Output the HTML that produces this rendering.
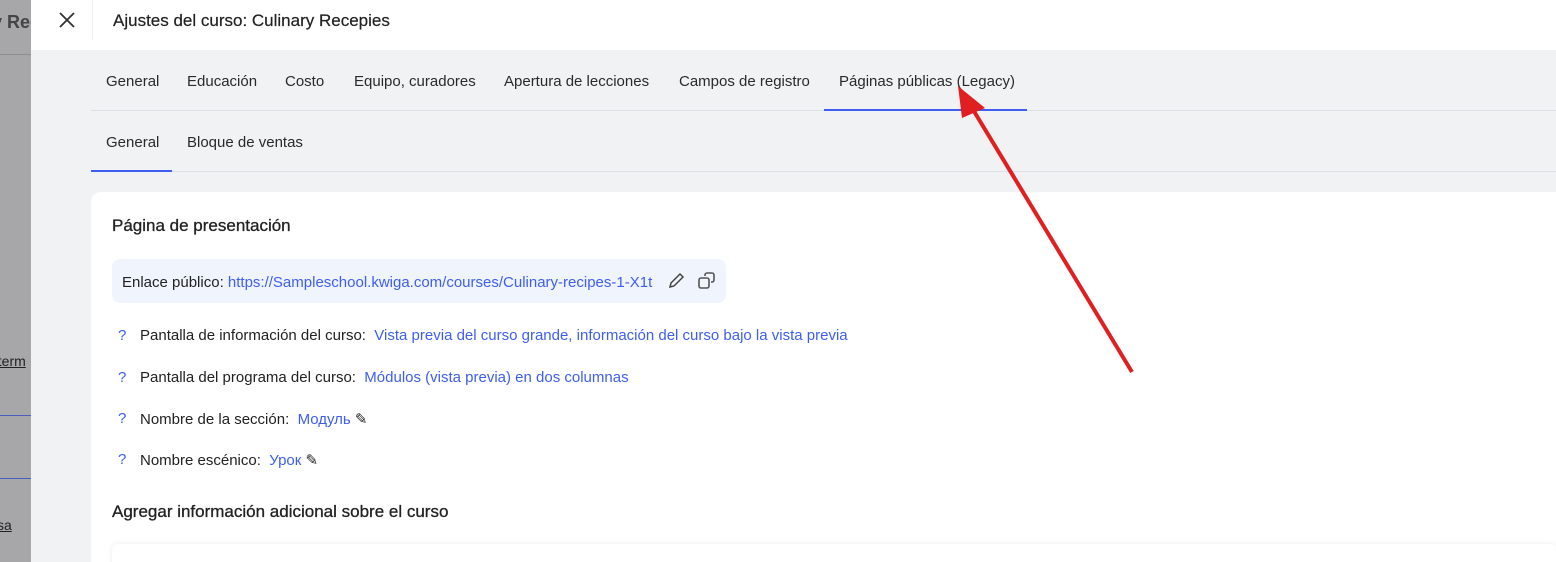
<!DOCTYPE html>
<html><head><meta charset="utf-8"><style>
*{margin:0;padding:0;box-sizing:border-box}
html,body{width:1556px;height:562px;overflow:hidden}
body{font-family:"Liberation Sans",sans-serif;background:#f0f2f4;position:relative;color:#222}
.left{position:absolute;left:0;top:0;width:31px;height:562px;background:#a7a7a9;overflow:hidden;white-space:nowrap}
.hdr{position:absolute;left:31px;top:0;right:0;height:50px;background:#fff}
.tab{position:absolute;font-size:15px;color:#2a2a2a;white-space:nowrap}
.line{position:absolute;height:1px;background:#dcdfe3}
.card{position:absolute;left:91px;top:192px;width:1465px;height:370px;background:#fff;border-radius:10px 0 0 0}
.blue{color:#3d5ef0}
.q{position:absolute;left:118px;color:#3d5ef0;font-size:15px}
.row{position:absolute;left:140px;font-size:15px;white-space:nowrap}
h3{position:absolute;left:112px;font-size:17px;font-weight:normal;color:#222;-webkit-text-stroke:0.3px #222;white-space:nowrap}
</style></head><body>
<div class="left">
<div style="position:absolute;left:-8px;top:12px;font-size:18px;color:#444;font-weight:bold">y Rec</div>
<div style="position:absolute;left:0;top:54px;width:31px;height:1px;background:#8e8e8e"></div>
<div style="position:absolute;left:-10px;top:353px;font-size:14px;color:#222;text-decoration:underline">aterm</div>
<div style="position:absolute;left:0;top:415px;width:31px;height:1px;background:#4a5dc0"></div>
<div style="position:absolute;left:0;top:478px;width:31px;height:1px;background:#4a5dc0"></div>
<div style="position:absolute;left:-3px;top:517px;font-size:14px;color:#222;text-decoration:underline">sa</div>
</div>
<div class="hdr">
<svg style="position:absolute;left:28px;top:12px" width="16" height="16" viewBox="0 0 16 16"><path d="M1 1L15 15M15 1L1 15" stroke="#333" stroke-width="1.8"/></svg>
<div style="position:absolute;left:61px;top:0;width:1px;height:40px;background:#eee"></div>
<div style="position:absolute;left:82px;top:11px;font-size:17px;color:#222;-webkit-text-stroke:0.2px #222">Ajustes del curso: Culinary Recepies</div>
</div>
<div class="tab" style="left:106px;top:73px">General</div>
<div class="tab" style="left:187px;top:73px">Educación</div>
<div class="tab" style="left:285px;top:73px">Costo</div>
<div class="tab" style="left:354px;top:73px">Equipo, curadores</div>
<div class="tab" style="left:504px;top:73px">Apertura de lecciones</div>
<div class="tab" style="left:679px;top:73px">Campos de registro</div>
<div class="tab" style="left:839px;top:73px">Páginas públicas (Legacy)</div>
<div class="line" style="left:91px;top:110px;right:0"></div>
<div style="position:absolute;left:824px;top:109px;width:203px;height:2px;background:#3d5ef0"></div>
<div class="tab" style="left:106px;top:134px">General</div>
<div class="tab" style="left:187px;top:134px">Bloque de ventas</div>
<div class="line" style="left:91px;top:171px;right:0"></div>
<div style="position:absolute;left:91px;top:170px;width:81px;height:2px;background:#3d5ef0"></div>
<div class="card"></div>
<h3 style="top:216px">Página de presentación</h3>
<div style="position:absolute;left:112px;top:259px;width:614px;height:44px;background:#f0f4fd;border-radius:8px"></div>
<div style="position:absolute;left:122px;top:274px;font-size:15px;white-space:nowrap">Enlace público: <span class="blue">https://Sampleschool.kwiga.com/courses/Culinary-recipes-1-X1t</span></div>
<svg style="position:absolute;left:668px;top:271px" width="18" height="18" viewBox="0 0 18 18" fill="none" stroke="#444" stroke-width="1.5"><path d="M2 16l1-4L12 3l3 3-9 9z"/></svg>
<svg style="position:absolute;left:697px;top:271px" width="20" height="20" viewBox="0 0 20 20" fill="none" stroke="#555" stroke-width="1.6"><rect x="2" y="7" width="10" height="10" rx="2"/><path d="M8 5V4a2 2 0 012-2h5a2 2 0 012 2v5a2 2 0 01-2 2h-1"/></svg>
<div class="q" style="top:327px">?</div><div class="row" style="top:327px">Pantalla de información del curso: <span class="blue">&nbsp;Vista previa del curso grande, información del curso bajo la vista previa</span></div>
<div class="q" style="top:369px">?</div><div class="row" style="top:369px">Pantalla del programa del curso: <span class="blue">&nbsp;Módulos (vista previa) en dos columnas</span></div>
<div class="q" style="top:410px">?</div><div class="row" style="top:410px">Nombre de la sección: <span class="blue">&nbsp;Модуль</span> ✎</div>
<div class="q" style="top:451px">?</div><div class="row" style="top:451px">Nombre escénico: <span class="blue">&nbsp;Урок</span> ✎</div>
<h3 style="top:502px">Agregar información adicional sobre el curso</h3>
<div style="position:absolute;left:112px;top:544px;width:1444px;height:30px;background:#fff;box-shadow:0 0 6px rgba(0,0,0,.08);border-radius:6px"></div>
<svg style="position:absolute;left:0;top:0" width="1556" height="562"><line x1="1132" y1="372" x2="972" y2="108" stroke="#e02020" stroke-width="4"/><polygon points="958,86 985,108 962,118" fill="#e02020"/></svg>
</body></html>
